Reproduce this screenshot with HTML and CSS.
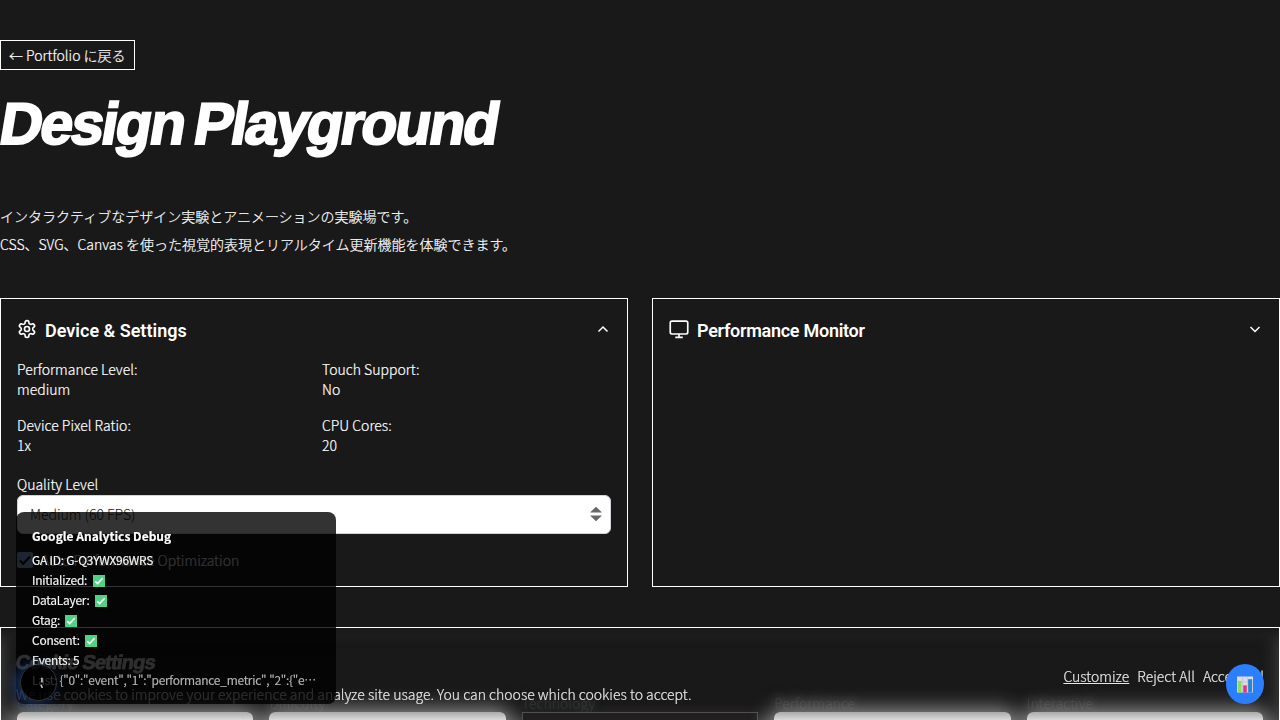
FILE: index.html
```html
<!DOCTYPE html>
<html lang="ja">
<head>
<meta charset="utf-8">
<title>Design Playground</title>
<link rel="stylesheet" href="styles.css">
</head>
<body>
<main class="page">
  <a class="back">← Portfolio に戻る</a>
  <h1 class="title">Design Playground</h1>
  <p class="intro">インタラクティブなデザイン実験とアニメーションの実験場です。<br>CSS、SVG、Canvas を使った視覚的表現とリアルタイム更新機能を体験できます。</p>
  <section class="panels">
    <article class="panel">
      <header class="panel-head">
        <svg class="icon" viewBox="0 0 24 24"><path d="M12.22 2h-.44a2 2 0 0 0-2 2v.18a2 2 0 0 1-1 1.73l-.43.25a2 2 0 0 1-2 0l-.15-.08a2 2 0 0 0-2.73.73l-.22.38a2 2 0 0 0 .73 2.73l.15.1a2 2 0 0 1 1 1.72v.51a2 2 0 0 1-1 1.74l-.15.09a2 2 0 0 0-.73 2.73l.22.38a2 2 0 0 0 2.73.73l.15-.08a2 2 0 0 1 2 0l.43.25a2 2 0 0 1 1 1.73V20a2 2 0 0 0 2 2h.44a2 2 0 0 0 2-2v-.18a2 2 0 0 1 1-1.73l.43-.25a2 2 0 0 1 2 0l.15.08a2 2 0 0 0 2.73-.73l.22-.39a2 2 0 0 0-.73-2.73l-.15-.08a2 2 0 0 1-1-1.74v-.5a2 2 0 0 1 1-1.74l.15-.09a2 2 0 0 0 .73-2.73l-.22-.38a2 2 0 0 0-2.73-.73l-.15.08a2 2 0 0 1-2 0l-.43-.25a2 2 0 0 1-1-1.73V4a2 2 0 0 0-2-2z"/><circle cx="12" cy="12" r="3"/></svg>
        <h2 class="panel-title">Device &amp; Settings</h2>
        <svg class="chevron" viewBox="0 0 16 16"><path d="M3.5 10.5 8 6l4.5 4.5"/></svg>
      </header>
      <div class="facts">
        <div>Performance Level:<br>medium</div><div>Touch Support:<br>No</div>
        <div>Device Pixel Ratio:<br>1x</div><div>CPU Cores:<br>20</div>
      </div>
      <div class="label">Quality Level</div>
      <div class="select"><span>Medium (60 FPS)</span><svg class="sorter" viewBox="0 0 12 16"><path d="M0 6.5 6 .7l6 5.8zM0 9.5h12L6 15.3z"/></svg></div>
      <div class="check-row"><span class="checkbox"><svg viewBox="0 0 16 16"><path d="m3 8.5 3.2 3.2L13 4.5"/></svg></span><span>Auto Performance Optimization</span></div>
    </article>
    <article class="panel">
      <header class="panel-head">
        <svg class="icon" viewBox="0 0 24 24"><rect x="1.5" y="2.5" width="21" height="15.5" rx="2"/><path d="M12 18v4M7.5 22h9"/></svg>
        <h2 class="panel-title monitor-title">Performance Monitor</h2>
        <svg class="chevron" viewBox="0 0 16 16"><path d="M3.5 6 8 10.5 12.5 6"/></svg>
      </header>
    </article>
  </section>
  <section class="filters">
    <div class="filter"><span class="ghost">Category</span><div class="field"></div></div>
    <div class="filter"><span class="ghost">Difficulty</span><div class="field"></div></div>
    <div class="filter"><span class="ghost">Technology</span><div class="field field-dark"></div></div>
    <div class="filter"><span class="ghost">Performance</span><div class="field"></div></div>
    <div class="filter"><span class="ghost">Interactive</span><div class="field"></div></div>
  </section>
</main>
<aside class="cookie">
  <div><h2 class="cookie-title">Cookie Settings</h2><p class="cookie-text">We use cookies to improve your experience and analyze site usage. You can choose which cookies to accept.</p></div>
  <div class="actions"><span class="underlined">Customize</span><span>Reject All</span><span>Accept All</span></div>
</aside>
<aside class="debug">
  <strong class="debug-title">Google Analytics Debug</strong>
  <div>GA ID: G-Q3YWX96WRS</div>
  <div>Initialized: <i class="tick"><svg viewBox="0 0 12 12"><path d="m2.3 6.3 2.3 2.2 5-5.3"/></svg></i></div>
  <div>DataLayer: <i class="tick"><svg viewBox="0 0 12 12"><path d="m2.3 6.3 2.3 2.2 5-5.3"/></svg></i></div>
  <div>Gtag: <i class="tick"><svg viewBox="0 0 12 12"><path d="m2.3 6.3 2.3 2.2 5-5.3"/></svg></i></div>
  <div>Consent: <i class="tick"><svg viewBox="0 0 12 12"><path d="m2.3 6.3 2.3 2.2 5-5.3"/></svg></i></div>
  <div>Events: 5</div>
  <div class="last">Last: {"0":"event","1":"performance_metric","2":{"e…</div>
</aside>
<div class="orb"><svg viewBox="0 0 36 36"><path d="M21.500 13v5M20.500 20.500l1.500 3"/></svg></div>
<div class="stats"><svg viewBox="0 0 18 18"><rect width="18" height="18" x="0" y="0" fill="#dedbe8"/><path d="M0 6h18M0 11h18M6 1v16M12 1v16" stroke="#c5c2d0"/><path fill="#8be052" d="M1 5h4v13H1z"/><path fill="#e4376f" d="M7 10h4v8H7z"/><path fill="#2686d5" d="M12.500 3h4.500v15h-4.500z"/></svg></div>
</body>
</html>
```
FILE: styles.css
```css
* { box-sizing: border-box; }
body { margin: 0; height: 720px; overflow: hidden; background: #191919; color: #fff; font: 300 14px/20px "Noto Sans CJK JP", sans-serif; -webkit-text-stroke: .2px; }
h1, h2, p { margin: 0; }
svg { display: block; fill: none; }
.page { height: 720px; overflow: hidden; padding-top: 40px; }
.back { display: block; width: 135px; height: 30px; border: 1px solid #fff; padding: 4px 8px; white-space: nowrap; }
.title { width: max-content; margin: 24px 0 0 -3px; font: 700 59px/60px "Liberation Sans", sans-serif; letter-spacing: -2.150px; word-spacing: -4px; white-space: nowrap; transform: skewX(-9.4deg); transform-origin: 0 52px; -webkit-text-stroke: 2px; }
.intro { margin-top: 48px; line-height: 28px; }
.panels { display: grid; grid-template-columns: 1fr 1fr; gap: 24px; margin-top: 40px; }
.panel { height: 289px; border: 1px solid #fff; padding: 19px 16px; }
.panel-head { display: flex; align-items: center; height: 22px; gap: 8px; }
.icon { width: 20px; height: 20px; stroke: #fff; stroke-width: 2; }
.panel-title { flex: 1; font: 600 18px/22px Roboto, sans-serif; padding-top: 3px; -webkit-text-stroke: 0; }
.monitor-title { letter-spacing: -.27px; }
.chevron { width: 16px; height: 16px; stroke: #fff; stroke-width: 1.5; }
.facts { display: grid; grid-template-columns: 289px 289px; column-gap: 16px; row-gap: 16px; margin-top: 19px; }
.label { margin-top: 19px; }
.select { display: flex; align-items: center; justify-content: space-between; height: 39px; margin-top: 1px; padding: 0 8px 2px 12px; background: #fff; border: 1px solid #d1d5db; border-radius: 6px; color: #191919; -webkit-text-stroke: 0; }
.sorter { width: 12px; height: 16px; fill: #666; }
.check-row { display: flex; align-items: center; gap: 8px; margin-top: 16px; }
.checkbox { width: 16px; height: 16px; border-radius: 2px; background: #8ab8ee; }
.checkbox path { stroke: #000; stroke-width: 2; }
.filters { display: grid; grid-template-columns: repeat(5, 1fr); gap: 16px; height: 93px; margin-top: 40px; padding: 65px 16px 0; border: 1px solid #fff; border-bottom: 0; box-shadow: inset 0 18px 14px -8px #191919, inset 0 0 18px rgba(170,170,170,.4); }
.ghost { display: block; width: max-content; height: 19px; color: rgba(90,90,90,.25); filter: blur(.5px); text-shadow: 0 -2px 10px rgba(150,160,160,.5); }
.field { position: relative; height: 40px; border-radius: 6px; background: linear-gradient(#aaa, #e0e0e0 9px); box-shadow: 0 0 20px 4px rgba(210,210,210,.6); }
.field-dark { background: #211f20; border: 1px solid #505050; border-radius: 0; box-shadow: none; }
.cookie { position: fixed; inset: 628px 1px auto; height: 92px; display: flex; justify-content: space-between; padding: 23px 15px 0; color: #e6e6e6; }
.cookie-title { font: 700 20px/22px "Liberation Sans", sans-serif; letter-spacing: -.8px; transform: skewX(-9.4deg); width: max-content; -webkit-text-stroke: .7px; }
.cookie-text { margin-top: 11px; white-space: nowrap; }
.actions { display: flex; gap: 8px; padding-top: 15px; }
.underlined { text-decoration: underline; }
.debug { position: fixed; left: 16px; top: 512px; width: 320px; height: 192px; padding: 14px 16px; border-radius: 8px; background: rgba(0,0,0,.8); font-size: 12px; font-weight: 350; letter-spacing: -.2px; white-space: nowrap; }
.debug-title { display: block; margin-bottom: 4px; letter-spacing: 0; }
.tick { display: inline-block; width: 12px; height: 12px; background: #52d184; vertical-align: -2px; margin-left: 3px; }
.tick path { stroke: #fff; stroke-width: 1.6; }
.last { color: #bbb; letter-spacing: -.24px; }
.orb { position: fixed; left: 20px; top: 664px; width: 37px; height: 37px; border: 1px solid #333; border-radius: 50%; background: rgba(0,0,0,.75); box-shadow: -5px 2px 14px rgba(38,100,210,.5); }
.orb path { stroke: #ccc; stroke-width: 1.6; }
.stats { position: fixed; left: 1226px; top: 664px; width: 38px; height: 40px; border-radius: 50%; background: #2b7fff; display: grid; place-items: center; }
.stats svg { width: 16px; height: 17px; }
```
